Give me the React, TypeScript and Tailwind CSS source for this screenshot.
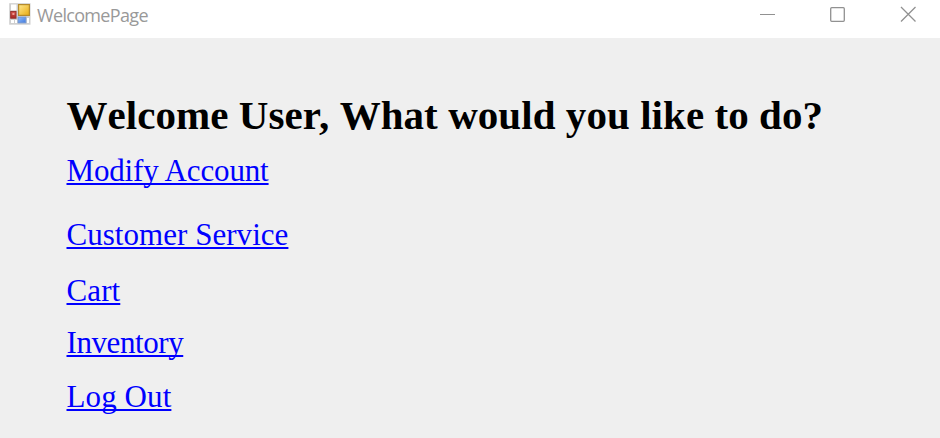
const links = [
  { label: "Modify Account", row: "mt-[14px]", tracking: "tracking-[-0.15px] [word-spacing:-1.6px]" },
  { label: "Customer Service", row: "mt-[28px]", tracking: "tracking-[0.04px]" },
  { label: "Cart", row: "mt-[20px]", tracking: "tracking-[0.1px]" },
  { label: "Inventory", row: "mt-[16px]", tracking: "tracking-[-0.42px]" },
  { label: "Log Out", row: "mt-[18px]", tracking: "tracking-[0.1px]" },
];

function FormIcon() {
  return (
    <svg width="22" height="22" viewBox="0 0 22 22" className="shrink-0">
      <defs>
        <linearGradient id="gold" x1="0" y1="0" x2="1" y2="1">
          <stop offset="0" stopColor="#ffe991" />
          <stop offset="1" stopColor="#e9ab10" />
        </linearGradient>
        <linearGradient id="red" x1="0" y1="0" x2="0" y2="1">
          <stop offset="0" stopColor="#d9564e" />
          <stop offset="1" stopColor="#a92420" />
        </linearGradient>
        <linearGradient id="blue" x1="0" y1="0" x2="1" y2="1">
          <stop offset="0" stopColor="#8fbcff" />
          <stop offset="1" stopColor="#4179dc" />
        </linearGradient>
      </defs>
      <rect x="0.2" y="0.2" width="21.3" height="21.5" fill="#cfcfcf" />
      <rect x="2" y="1.5" width="5.5" height="6" fill="#fff" />
      <rect x="2" y="17" width="3" height="3" fill="#fff" />
      <rect x="6" y="17" width="2" height="3" fill="#fff" />
      <rect x="18" y="15" width="2" height="5" fill="#fff" />
      <rect x="9.6" y="1.6" width="10.8" height="10.8" fill="url(#gold)" stroke="#b58a2c" strokeWidth="1.2" />
      <rect x="1.7" y="8.4" width="5.3" height="6.8" fill="url(#red)" stroke="#94302c" />
      <rect x="3.4" y="10" width="2" height="2" fill="#ed9992" />
      <rect x="9.2" y="14.2" width="7.6" height="5.6" fill="url(#blue)" stroke="#6e96d8" />
    </svg>
  );
}

export default function App() {
  return (
    <div className="flex h-[438px] w-[940px] flex-col overflow-hidden bg-[#efefef]">
      <header className="flex h-[38px] shrink-0 items-start justify-between bg-white">
        <div className="flex pt-[3px] pl-[9px]">
          <FormIcon />
          <span className="ml-[6px] h-[24px] font-['Open_Sans','Noto_Sans',sans-serif] text-[18px] leading-[24px] tracking-[-0.67px] text-[#999999]">
            WelcomePage
          </span>
        </div>
        <div className="flex gap-[54px] pt-[6px] pr-[24px] text-[#919191]">
          <svg width="16" height="17" viewBox="0 0 16 17">
            <path d="M0 8.5H15" stroke="currentColor" />
          </svg>
          <svg width="16" height="17" viewBox="0 0 16 17" fill="none">
            <rect x="0.7" y="1.7" width="13.6" height="13.6" rx="1" stroke="currentColor" strokeWidth="1.3" />
          </svg>
          <svg width="16" height="17" viewBox="0 0 16 17" fill="none">
            <path d="M1 1L15.5 15.5M15.5 1L1 15.5" stroke="currentColor" strokeWidth="1.3" />
          </svg>
        </div>
      </header>
      <main className="flex flex-col items-start pt-[53px] pl-[66.5px] font-['Liberation_Serif',serif]">
        <h1 className="text-[41px] leading-[48px] font-bold tracking-[0.06px] whitespace-nowrap text-black [font-kerning:none]">
          Welcome Use<span className="tracking-[-2px]">r</span>, What would you like to do?
        </h1>
        {links.map((link) => (
          <a
            key={link.label}
            href="#"
            className={`${link.row} ${link.tracking} text-[31px] leading-[36px] whitespace-nowrap text-[#0000ff] underline decoration-[1.6px] underline-offset-[2px] [font-kerning:none] [text-decoration-skip-ink:none]`}
          >
            {link.label}
          </a>
        ))}
      </main>
    </div>
  );
}
